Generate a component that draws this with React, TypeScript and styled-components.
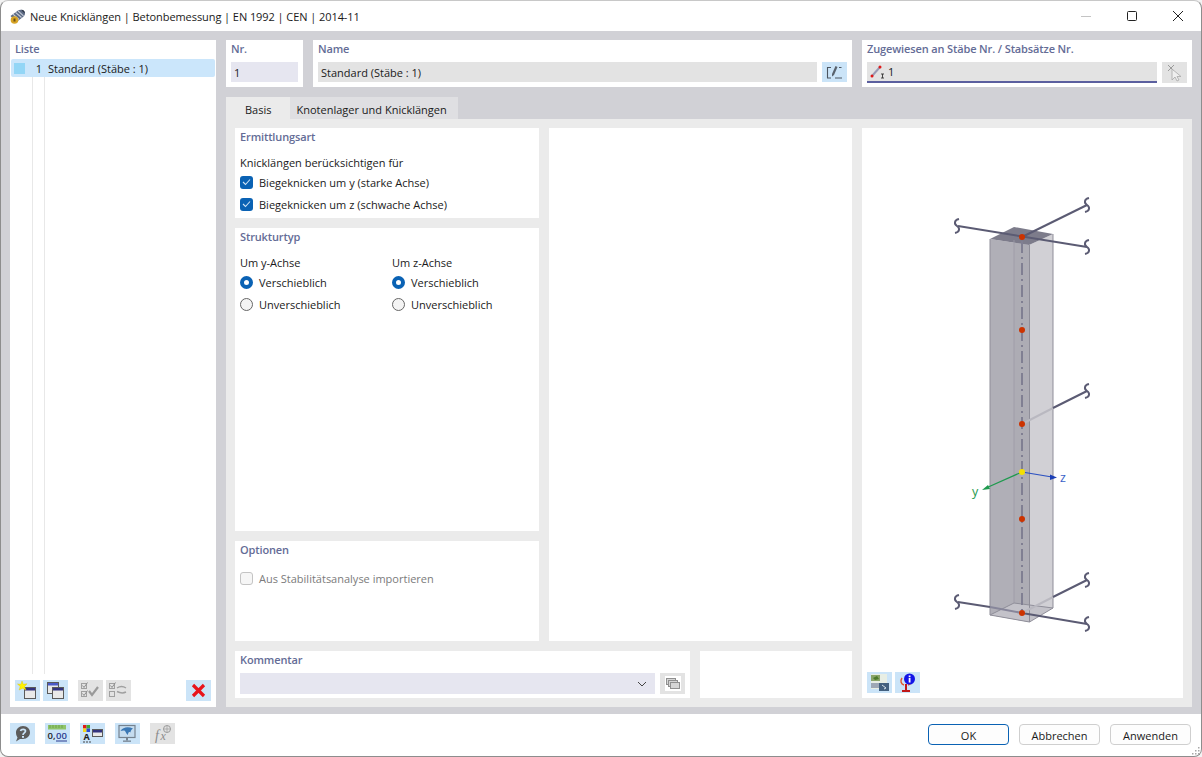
import * as React from 'react'
import styled, { createGlobalStyle } from 'styled-components'

const GlobalStyle = createGlobalStyle`
  html, body {
    margin: 0;
    padding: 0;
    background: #f3f3f3;
  }
  * {
    box-sizing: border-box;
  }
`

const Window = styled.div`
  width: 1202px;
  height: 757px;
  display: flex;
  flex-direction: column;
  overflow: hidden;
  background: #fff;
  border: 1px solid #8d8d8d;
  border-top-color: #c8c8c8;
  border-radius: 8px 8px 8px 8px;
  font-family: 'Open Sans', 'Noto Sans', sans-serif;
  font-size: 11px;
  color: #1a1a1a;
`

const TitleBar = styled.div`
  height: 30px;
  flex: none;
  display: flex;
  align-items: center;
  padding-left: 8px;
`

const TitleText = styled.div`
  margin-left: 4px;
  font-size: 11px;
  letter-spacing: -0.07px;
  flex: 1;
`

const WinButton = styled.div`
  width: 46px;
  height: 30px;
  display: flex;
  align-items: center;
  justify-content: center;
`

const Body = styled.div`
  flex: 1;
  display: flex;
  gap: 10px;
  padding: 9px 9px 7px 9px;
  background: #d1d1d6;
`

const Card = styled.div`
  background: #fff;
  display: flex;
  flex-direction: column;
  min-width: 0;
`

const ListCard = styled(Card)`
  width: 206px;
  flex: none;
`

const Heading = styled.div`
  height: 22px;
  padding: 1px 0 0 5px;
  font-weight: 600;
  font-size: 11px;
  letter-spacing: -0.13px;
  line-height: 16px;
  color: #646c96;
`

const ListBody = styled.div`
  flex: 1;
  position: relative;
  display: flex;
  flex-direction: column;
  margin-top: -3px;
`

const ListRow = styled.div`
  height: 18px;
  margin: 0 1px;
  display: flex;
  align-items: center;
  background: #cbe6fb;
  border-radius: 2px;
`

const Swatch = styled.div`
  width: 11px;
  height: 11px;
  margin-left: 3px;
  background: #93d6f6;
`

const RowNo = styled.div`
  width: 17px;
  text-align: right;
`

const RowLabel = styled.div`
  margin-left: 6px;
`

const TreeGuides = styled.div`
  flex: 1;
  margin-left: 22px;
  width: 13px;
  border-left: 1px solid #e8e8e8;
  border-right: 1px solid #e8e8e8;
`

const ListTools = styled.div`
  height: 33px;
  flex: none;
  display: flex;
  padding: 6px 5px 0 5px;
`

const IconBtn = styled.div<{ $tone?: 'blue' | 'grey'; $gap?: number; $h?: number }>`
  width: 25px;
  height: ${(p) => p.$h ?? 21}px;
  flex: none;
  margin-left: ${(p) => p.$gap ?? 0}px;
  display: flex;
  align-items: center;
  justify-content: center;
  background: ${(p) => (p.$tone === 'grey' ? '#e3e3e3' : '#cbe4f8')};
`

const Main = styled.div`
  flex: 1;
  min-width: 0;
  display: flex;
  flex-direction: column;
`

const TopRow = styled.div`
  height: 47px;
  flex: none;
  display: grid;
  grid-template-columns: 77px 539px 330px;
  gap: 10px;
`

const FieldRow = styled.div`
  display: flex;
  gap: 5px;
  padding: 0 5px;
`

const Field = styled.div<{ $bg?: string; $underline?: boolean }>`
  flex: 1;
  height: ${(p) => (p.$underline ? 21 : 20)}px;
  padding-left: 3px;
  display: flex;
  align-items: center;
  gap: 2px;
  background: ${(p) => p.$bg ?? '#e3e3e3'};
  border-bottom: ${(p) => (p.$underline ? '2px solid #5b5f9f' : 'none')};
`

const Tabs = styled.div`
  height: 22px;
  margin-top: 10px;
  flex: none;
  display: flex;
`

const Tab = styled.div<{ $active?: boolean }>`
  padding: 2px ${(p) => (p.$active ? 19 : 11)}px 0 ${(p) => (p.$active ? 19 : 6)}px;
  display: flex;
  align-items: center;
  background: ${(p) => (p.$active ? '#ebebeb' : '#dfdfe2')};
`

const TabBody = styled.div`
  flex: 1;
  display: grid;
  grid-template-columns: 617px 321px;
  gap: 10px;
  padding: 9px;
  background: #ebebeb;
`

const LeftArea = styled.div`
  display: flex;
  flex-direction: column;
  gap: 10px;
`

const UpperArea = styled.div`
  flex: 1;
  display: grid;
  grid-template-columns: 304px 303px;
  gap: 10px;
`

const LowerArea = styled.div`
  height: 47px;
  flex: none;
  display: grid;
  grid-template-columns: 455px 152px;
  gap: 10px;
`

const Stack = styled.div`
  display: flex;
  flex-direction: column;
  gap: 10px;
`

const Section = styled(Card)<{ $h?: number }>`
  flex: ${(p) => (p.$h ? `0 0 ${p.$h}px` : '1')};
`

const SectionBody = styled.div`
  padding: 4px 5px 0 5px;
  display: flex;
  flex-direction: column;
`

const Line = styled.div<{ $muted?: boolean }>`
  height: 22px;
  display: flex;
  align-items: center;
  gap: 6px;
  white-space: nowrap;
  color: ${(p) => (p.$muted ? '#7b7b7b' : '#1a1a1a')};
`

const Caption = styled(Line)`
  height: 16px;
  margin-bottom: 1px;
`

const Check = styled.div<{ $checked?: boolean }>`
  width: 13px;
  height: 13px;
  flex: none;
  border-radius: 3px;
  display: flex;
  align-items: center;
  justify-content: center;
  background: ${(p) => (p.$checked ? '#0a62b4' : '#f6f6f6')};
  border: ${(p) => (p.$checked ? 'none' : '1px solid #c4c4c4')};
`

const Radio = styled.div<{ $checked?: boolean }>`
  width: 13px;
  height: 13px;
  flex: none;
  border-radius: 50%;
  background: ${(p) => (p.$checked ? '#fff' : '#f4f4f4')};
  border: ${(p) => (p.$checked ? '4px solid #0a62b4' : '1px solid #666')};
`

const RadioColumns = styled.div`
  display: grid;
  grid-template-columns: 152px 1fr;
`

const CommentRow = styled.div`
  display: flex;
  gap: 5px;
  padding: 0 5px;
`

const Combo = styled.div`
  flex: 1;
  height: 21px;
  display: flex;
  align-items: center;
  justify-content: flex-end;
  padding-right: 8px;
  background: #e6e6f0;
`

const DrawingCard = styled(Card)`
  grid-column: 2;
`

const DrawingSvg = styled.svg`
  display: block;
  flex: none;
`

const DrawingTools = styled.div`
  display: flex;
  gap: 3px;
  padding: 2px 0 0 5px;
`

const Footer = styled.div`
  height: 42px;
  flex: none;
  position: relative;
  display: flex;
  align-items: flex-start;
  padding: 9px 10px 0 9px;
`

const FooterIcons = styled.div`
  display: flex;
  gap: 10px;
  flex: 1;
`

const FooterButtons = styled.div`
  display: flex;
  gap: 10px;
  padding-top: 1px;
`

const DialogButton = styled.div<{ $primary?: boolean }>`
  width: 81px;
  height: 21px;
  padding-top: 1px;
  display: flex;
  align-items: center;
  justify-content: center;
  border-radius: 4px;
  background: #fdfdfd;
  border: 1px solid ${(p) => (p.$primary ? '#0a62b4' : '#cfcfcf')};
`

const Grip = styled.svg`
  position: absolute;
  right: 1px;
  bottom: 1px;
`

const Brace = ({ x, y }: { x: number; y: number }) => (
  <path
    d={`M${x + 2} ${y - 7}C${x - 3} ${y - 6} ${x - 3} ${y - 2} ${x} ${y}C${x + 3} ${y + 2} ${x + 3} ${y + 6} ${x - 2} ${y + 7}`}
    fill="none"
    stroke="#5b5b73"
    strokeWidth="2"
  />
)

const Column = () => (
  <DrawingSvg width="321" height="542" viewBox="862 128 321 542">
    <polygon points="990,239 1029,245 1029,622 990,615" fill="#b0afb7" />
    <polygon points="1029,245 1053,234 1053,608 1029,622" fill="#d1d0d5" />
    <polygon points="1014,240 1029,245 1029,622 1014,603" fill="#a6a5b0" opacity="0.3" />
    <polygon points="990,239 1014,227 1053,234 1029,245" fill="#7d7c8b" />
    <polygon points="990,615 1014,603 1053,608 1029,622" fill="#c3c2c9" />
    <path
      d="M990 239V615L1029.500 622L1053 608V234M1029.500 245V622M990 615L1014 603L1053 608"
      fill="none"
      stroke="#8f8e99"
      strokeWidth="1"
    />
    <line x1="1014" y1="240" x2="1014" y2="603" stroke="#9c9ba6" strokeWidth="0.8" />
    <line x1="1022" y1="241" x2="1022" y2="610" stroke="#807f92" strokeWidth="2" strokeDasharray="12 4 2 4" />

    <line x1="958" y1="226" x2="1087" y2="247" stroke="#5b5b73" strokeWidth="2" />
    <line x1="1022" y1="237" x2="1087" y2="205" stroke="#5b5b73" strokeWidth="2" />
    <line x1="1022" y1="424" x2="1053" y2="408" stroke="#b9b8c0" strokeWidth="2" />
    <line x1="1053" y1="408" x2="1087" y2="391" stroke="#5b5b73" strokeWidth="2" />
    <line x1="958" y1="602" x2="990" y2="607" stroke="#5b5b73" strokeWidth="2" />
    <line x1="990" y1="607" x2="1022" y2="613" stroke="#87869a" strokeWidth="2" />
    <line x1="1022" y1="613" x2="1087" y2="624" stroke="#5b5b73" strokeWidth="2" />
    <line x1="1022" y1="613" x2="1053" y2="597" stroke="#b9b8c0" strokeWidth="2" />
    <line x1="1053" y1="597" x2="1087" y2="580" stroke="#5b5b73" strokeWidth="2" />
    <Brace x={957} y={226} />
    <Brace x={1087} y={205} />
    <Brace x={1087} y={247} />
    <Brace x={1087} y={391} />
    <Brace x={957} y={602} />
    <Brace x={1087} y={580} />
    <Brace x={1087} y={624} />

    <line x1="1022" y1="472" x2="986" y2="488" stroke="#1e9a4e" strokeWidth="1.200" />
    <polygon points="982,490 988,485 990,489" fill="#1e9a4e" />
    <line x1="1022" y1="472" x2="1052" y2="477" stroke="#2b50c0" strokeWidth="1.200" />
    <polygon points="1057,477.500 1050,474.500 1050,480" fill="#1c3fb5" />
    <text x="972" y="496" fontSize="12.5" fill="#1e9a4e" fontFamily="Open Sans">y</text>
    <text x="1060" y="482" fontSize="12.5" fill="#3a62c8" fontFamily="Open Sans">z</text>

    <circle cx="1022" cy="237" r="3" fill="#cc3300" />
    <circle cx="1022" cy="330" r="3" fill="#cc3300" />
    <circle cx="1022" cy="424" r="3" fill="#cc3300" />
    <circle cx="1022" cy="519" r="3" fill="#cc3300" />
    <circle cx="1022" cy="613" r="3" fill="#cc3300" />
    <circle cx="1022" cy="472" r="3" fill="#f5e000" />
  </DrawingSvg>
)

const AppIcon = () => (
  <svg width="17" height="17" viewBox="0 0 17 17">
    <path d="M1.500 8L9 2.500C11 1 14.500 1.500 15.500 3.500C16.500 5.500 16 7.500 14 9L7.500 14Z" fill="#5d6b85" />
    <path d="M4 6.200L10 11.500M6.500 4.400L12.500 9.500M9 2.800L14.500 7.800" stroke="#c8ced9" strokeWidth="1.100" />
    <path d="M12.500 1.800C14.500 1.800 16 3.500 15.800 5.500L13.500 3.500Z" fill="#2e3646" />
    <circle cx="5.500" cy="12" r="3.800" fill="#d8a526" />
    <rect x="4.500" y="10.500" width="2" height="3" fill="#6a5016" />
  </svg>
)

const MiniWindow = ({ x, y, w = 11, h = 11, bar = '#33337f' }: { x: number; y: number; w?: number; h?: number; bar?: string }) => (
  <g>
    <rect x={x + 0.5} y={y + 0.5} width={w} height={h} fill="#e9e9e9" stroke="#5a5a5a" />
    <rect x={x + 1} y={y + 1} width={w - 1} height="2.500" fill={bar} />
  </g>
)

const NewIcon = () => (
  <svg width="21" height="19" viewBox="0 0 21 19">
    <MiniWindow x={7} y={6} w={11} h={11} />
    <polygon
      points="5,0 6.300,3.300 10,2.800 7.500,5.600 9,9 5.500,7.300 2.200,9 3.200,5.500 0.500,3 4,3.200"
      fill="#fff200"
      stroke="#d8c400"
      strokeWidth="0.4"
    />
  </svg>
)

const CopyIcon = () => (
  <svg width="21" height="19" viewBox="0 0 21 19">
    <MiniWindow x={2} y={1} w={11} h={11} bar="#4a5ac8" />
    <MiniWindow x={7} y={6} w={11} h={11} />
  </svg>
)

const CheckAllIcon = () => (
  <svg width="21" height="19" viewBox="0 0 21 19">
    <rect x="1.500" y="2.500" width="5" height="5" fill="none" stroke="#a0a0a0" />
    <rect x="1.500" y="10.500" width="5" height="5" fill="none" stroke="#a0a0a0" />
    <path d="M2.500 4.500L4 6.500L7.500 1.500M2.500 12.500L4 14.500L7.500 9.500" fill="none" stroke="#8e8e8e" />
    <path d="M9 10L12 14L18 6" fill="none" stroke="#9a9a9a" strokeWidth="2.200" />
  </svg>
)

const CheckSwapIcon = () => (
  <svg width="21" height="19" viewBox="0 0 21 19">
    <rect x="1.500" y="2.500" width="5" height="5" fill="none" stroke="#a0a0a0" />
    <rect x="1.500" y="10.500" width="5" height="5" fill="none" stroke="#a0a0a0" />
    <path d="M2.500 4.500L4 6.500L7.500 1.500" fill="none" stroke="#8e8e8e" />
    <path d="M9 7C12 5 15 5 18 7M18 11C15 12.500 12 12 9 10.500" fill="none" stroke="#a0a0a0" strokeWidth="1.500" />
  </svg>
)

const DeleteIcon = () => (
  <svg width="15" height="15" viewBox="0 0 15 15">
    <path d="M2 2L13 13M13 2L2 13" stroke="#e8141c" strokeWidth="3.200" />
  </svg>
)

const HelpIcon = () => (
  <svg width="19" height="17" viewBox="0 0 19 17">
    <path d="M10 1C14.500 1 17 4 17 7.500C17 11 14 14 10 14H7L3 16.500L4.500 12.500C3.500 11 3 9.500 3 7.500C3 4 6 1 10 1Z" fill="#5c5c5c" />
    <path d="M7.500 6C8 3.800 12.500 3.800 12.500 6C12.500 8 10 7.800 10 10" fill="none" stroke="#cbe4f8" strokeWidth="1.700" />
    <rect x="9" y="11" width="2" height="1.800" fill="#cbe4f8" />
  </svg>
)

const DecimalsIcon = () => (
  <svg width="21" height="19" viewBox="0 0 21 19">
    <rect x="1" y="1" width="18" height="4.500" fill="#8fc46a" />
    <path d="M3 1V4M6 1V4M9 1V4M12 1V4M15 1V4" stroke="#5f9a3e" strokeWidth="0.7" />
    <text x="0.500" y="14.500" fontSize="9.500" fontWeight="600" fill="#222" fontFamily="Open Sans">0,</text>
    <text x="9" y="14.500" fontSize="9.500" fontWeight="600" fill="#2a3b8f" fontFamily="Open Sans">00</text>
    <line x1="9" y1="17" x2="20" y2="17" stroke="#2a3b8f" />
  </svg>
)

const DisplayIcon = () => (
  <svg width="21" height="19" viewBox="0 0 21 19">
    <rect x="1" y="1" width="3.500" height="3.500" fill="#e21b1b" />
    <rect x="4.500" y="1" width="3.500" height="3.500" fill="#3ea832" />
    <rect x="1" y="4.500" width="3.500" height="3.500" fill="#f1d91c" />
    <rect x="4.500" y="4.500" width="3.500" height="3.500" fill="#2c4bd0" />
    <MiniWindow x={10} y={5} w={10} h={7} />
    <text x="1.500" y="15.500" fontSize="9" fontWeight="700" fill="#222" fontFamily="Open Sans">A</text>
    <line x1="1" y1="18" x2="9" y2="18" stroke="#444" strokeDasharray="2 1" />
  </svg>
)

const MonitorIcon = () => (
  <svg width="21" height="19" viewBox="0 0 21 19">
    <rect x="2" y="1.500" width="16" height="12" fill="#c5dcef" stroke="#75828f" strokeWidth="1.200" />
    <path d="M3.500 7C6 3 11 2.500 16 4.500C14.500 5.500 13.500 6.500 13.500 8.500C12 7.500 11 8.500 11 11C9 10 9 8 8 7C6.500 6 5 7 3.500 7Z" fill="#3b78b5" />
    <rect x="9" y="14" width="2" height="2.500" fill="#75828f" />
    <rect x="6" y="16.500" width="8" height="1.300" fill="#75828f" />
  </svg>
)

const FormulaIcon = () => (
  <svg width="21" height="19" viewBox="0 0 21 19">
    <text x="3" y="16" fontSize="14" fontStyle="italic" fill="#8b8b8b" fontFamily="Liberation Serif">f</text>
    <text x="8.500" y="16" fontSize="12" fontStyle="italic" fill="#8b8b8b" fontFamily="Liberation Serif">x</text>
    <circle cx="15" cy="5" r="3.500" fill="none" stroke="#9a9a9a" />
    <path d="M12 5H18M15 2V8" stroke="#9a9a9a" strokeWidth="0.7" />
  </svg>
)

const ViewIcon = () => (
  <svg width="21" height="19" viewBox="0 0 21 19">
    <rect x="2" y="1" width="16" height="15" fill="#e8eee4" />
    <rect x="2" y="2" width="9" height="6" fill="#8aa568" />
    <path d="M4 5L8 3L10 6L6 7Z" fill="#4d7a2b" />
    <rect x="2" y="10" width="11" height="5" fill="#9ea7b5" />
    <rect x="10" y="10" width="10" height="8" fill="#43607f" />
    <path d="M13 12L17 15L15 16" fill="none" stroke="#d5e0ea" />
  </svg>
)

const InfoIcon = () => (
  <svg width="21" height="20" viewBox="0 0 21 20">
    <path d="M5 5C3 8 4 11 7 12M11 12C14 11 15 10 15 8" fill="none" stroke="#e2572b" strokeWidth="1.400" />
    <path d="M9 11V17" stroke="#c01818" strokeWidth="2" />
    <path d="M5 18H13" stroke="#c01818" strokeWidth="2" />
    <circle cx="12.500" cy="6" r="5.500" fill="#1414e6" />
    <rect x="11.700" y="5" width="1.800" height="4.500" fill="#fff" />
    <rect x="11.700" y="2.500" width="1.800" height="1.700" fill="#fff" />
  </svg>
)

const EditIcon = () => (
  <svg width="17" height="15" viewBox="0 0 17 15">
    <path d="M5 2.500H1.500V13H5M9 13H16M13 2.500H15.500" fill="none" stroke="#4c5560" strokeWidth="1.100" />
    <path d="M9.500 1L11.500 2L8 10L6 11.500L6 9Z" fill="#59626d" />
  </svg>
)

const MemberIcon = () => (
  <svg width="16" height="14" viewBox="0 0 16 14">
    <line x1="2" y1="11" x2="10" y2="2" stroke="#9a9ab4" strokeWidth="2" />
    <circle cx="2" cy="11" r="1.500" fill="#e01818" />
    <circle cx="10" cy="2" r="1.500" fill="#e01818" />
    <path d="M11 9H14M12.500 9V13M11 13H14" stroke="#333" strokeWidth="0.9" fill="none" />
  </svg>
)

const PickIcon = () => (
  <svg width="19" height="18" viewBox="0 0 19 18">
    <path d="M3 1L9 7M9 1L3 7" stroke="#9a9a9a" strokeWidth="1" />
    <path d="M7 5V16L10 13L12 17L14 16L12 12.500H16Z" fill="#efefef" stroke="#a8a8a8" strokeWidth="0.8" />
  </svg>
)

const ChevronIcon = () => (
  <svg width="10" height="6" viewBox="0 0 10 6">
    <path d="M1 1L5 5L9 1" fill="none" stroke="#444" strokeWidth="1" />
  </svg>
)

const CommentPickIcon = () => (
  <svg width="16" height="15" viewBox="0 0 16 15">
    <rect width="16" height="15" fill="#fff" />
    <rect x="1.500" y="2.500" width="9" height="6" fill="#d5d5d5" stroke="#8f8f8f" />
    <rect x="3.500" y="4.500" width="9" height="6" fill="#d5d5d5" stroke="#8f8f8f" />
    <rect x="5.500" y="6.500" width="9" height="6" fill="#d5d5d5" stroke="#8f8f8f" />
  </svg>
)

const Tick = () => (
  <svg width="9" height="8" viewBox="0 0 9 8">
    <path d="M1 4L3.500 6.500L8 1.500" fill="none" stroke="#cfe3f5" strokeWidth="1.100" />
  </svg>
)

export default function App() {
  return (
    <Window>
      <GlobalStyle />
      <TitleBar>
        <AppIcon />
        <TitleText>Neue Knicklängen | Betonbemessung | EN 1992 | CEN | 2014-11</TitleText>
        <WinButton>
          <svg width="10" height="10" viewBox="0 0 10 10">
            <line x1="0" y1="5.500" x2="10" y2="5.500" stroke="#c4c4c4" />
          </svg>
        </WinButton>
        <WinButton>
          <svg width="10" height="10" viewBox="0 0 10 10">
            <rect x="0.500" y="0.500" width="9" height="9" rx="1" fill="none" stroke="#222" />
          </svg>
        </WinButton>
        <WinButton>
          <svg width="10" height="10" viewBox="0 0 10 10">
            <path d="M0 0L10 10M10 0L0 10" stroke="#222" />
          </svg>
        </WinButton>
      </TitleBar>

      <Body>
        <ListCard>
          <Heading>Liste</Heading>
          <ListBody>
            <ListRow>
              <Swatch />
              <RowNo>1</RowNo>
              <RowLabel>Standard (Stäbe : 1)</RowLabel>
            </ListRow>
            <TreeGuides />
          </ListBody>
          <ListTools>
            <IconBtn><NewIcon /></IconBtn>
            <IconBtn $gap={3}><CopyIcon /></IconBtn>
            <IconBtn $tone="grey" $gap={10}><CheckAllIcon /></IconBtn>
            <IconBtn $tone="grey" $gap={3}><CheckSwapIcon /></IconBtn>
            <IconBtn $gap={55}><DeleteIcon /></IconBtn>
          </ListTools>
        </ListCard>

        <Main>
          <TopRow>
            <Card>
              <Heading>Nr.</Heading>
              <FieldRow>
                <Field $bg="#e6e6f0">1</Field>
              </FieldRow>
            </Card>
            <Card>
              <Heading>Name</Heading>
              <FieldRow>
                <Field>Standard (Stäbe : 1)</Field>
                <IconBtn $h={20}><EditIcon /></IconBtn>
              </FieldRow>
            </Card>
            <Card>
              <Heading>Zugewiesen an Stäbe Nr. / Stabsätze Nr.</Heading>
              <FieldRow>
                <Field $underline>
                  <MemberIcon />
                  1
                </Field>
                <IconBtn $tone="grey"><PickIcon /></IconBtn>
              </FieldRow>
            </Card>
          </TopRow>

          <Tabs>
            <Tab $active>Basis</Tab>
            <Tab>Knotenlager und Knicklängen</Tab>
          </Tabs>

          <TabBody>
            <LeftArea>
              <UpperArea>
                <Stack>
                  <Section $h={90}>
                    <Heading>Ermittlungsart</Heading>
                    <SectionBody>
                      <Caption>Knicklängen berücksichtigen für</Caption>
                      <Line>
                        <Check $checked><Tick /></Check>
                        Biegeknicken um y (starke Achse)
                      </Line>
                      <Line>
                        <Check $checked><Tick /></Check>
                        Biegeknicken um z (schwache Achse)
                      </Line>
                    </SectionBody>
                  </Section>
                  <Section>
                    <Heading>Strukturtyp</Heading>
                    <SectionBody>
                      <RadioColumns>
                        <div>
                          <Caption>Um y-Achse</Caption>
                          <Line><Radio $checked />Verschieblich</Line>
                          <Line><Radio />Unverschieblich</Line>
                        </div>
                        <div>
                          <Caption>Um z-Achse</Caption>
                          <Line><Radio $checked />Verschieblich</Line>
                          <Line><Radio />Unverschieblich</Line>
                        </div>
                      </RadioColumns>
                    </SectionBody>
                  </Section>
                  <Section $h={100}>
                    <Heading>Optionen</Heading>
                    <SectionBody>
                      <Line $muted>
                        <Check />
                        Aus Stabilitätsanalyse importieren
                      </Line>
                    </SectionBody>
                  </Section>
                </Stack>
                <Section />
              </UpperArea>
              <LowerArea>
                <Section>
                  <Heading>Kommentar</Heading>
                  <CommentRow>
                    <Combo><ChevronIcon /></Combo>
                    <IconBtn $tone="grey"><CommentPickIcon /></IconBtn>
                  </CommentRow>
                </Section>
                <Section />
              </LowerArea>
            </LeftArea>

            <DrawingCard>
              <Column />
              <DrawingTools>
                <IconBtn><ViewIcon /></IconBtn>
                <IconBtn><InfoIcon /></IconBtn>
              </DrawingTools>
            </DrawingCard>
          </TabBody>
        </Main>
      </Body>

      <Footer>
        <FooterIcons>
          <IconBtn><HelpIcon /></IconBtn>
          <IconBtn><DecimalsIcon /></IconBtn>
          <IconBtn><DisplayIcon /></IconBtn>
          <IconBtn><MonitorIcon /></IconBtn>
          <IconBtn $tone="grey"><FormulaIcon /></IconBtn>
        </FooterIcons>
        <FooterButtons>
          <DialogButton $primary>OK</DialogButton>
          <DialogButton>Abbrechen</DialogButton>
          <DialogButton>Anwenden</DialogButton>
        </FooterButtons>
        <Grip width="9" height="9" viewBox="0 0 9 9">
          <path d="M7 1h1.500v1.500H7zM4 4h1.500v1.500H4zM7 4h1.500v1.500H7zM1 7h1.500v1.500H1zM4 7h1.500v1.500H4zM7 7h1.500v1.500H7z" fill="#a8a8a8" />
        </Grip>
      </Footer>
    </Window>
  )
}
